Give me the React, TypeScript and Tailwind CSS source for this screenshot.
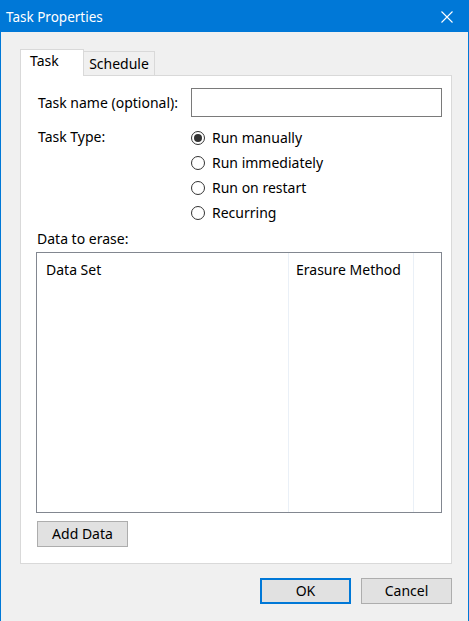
import React from "react";

const font = { fontFamily: '"Segoe UI", "Noto Sans", "Liberation Sans", sans-serif' };

function Radio({ label, checked }: { label: string; checked?: boolean }) {
  return (
    <div className="flex h-[25px] items-center">
      <span className="flex h-[14px] w-[14px] items-center justify-center rounded-full border border-[#333333] bg-white">
        {checked && <span className="h-[8px] w-[8px] rounded-full bg-[#333333]" />}
      </span>
      <span className="ml-[7px] text-[14px] leading-none text-black">{label}</span>
    </div>
  );
}

function Button({ label, primary, className }: { label: string; primary?: boolean; className?: string }) {
  return (
    <button
      className={
        "flex h-[26px] w-[91px] items-center justify-center bg-[#e1e1e1] text-[14px] leading-none text-black " +
        (primary ? "border-2 border-[#0078d7] " : "border border-[#adadad] ") +
        (className ?? "")
      }
    >
      {label}
    </button>
  );
}

export default function App() {
  return (
    <div
      className="flex h-[621px] w-[469px] flex-col border-x border-[#0078d7] bg-[#f0f0f0] antialiased"
      style={font}
    >
      {/* title bar */}
      <div className="flex h-[32px] shrink-0 items-center justify-between bg-[#0078d7] pl-[5px] pr-[15px]">
        <span className="pt-[3px] text-[13.5px] leading-none text-white">Task Properties</span>
        <svg width="12" height="12" viewBox="0 0 12 12" className="mt-[2px] block">
          <path d="M0.5 0.5 L11.5 11.5 M11.5 0.5 L0.5 11.5" stroke="white" strokeWidth="1.1" fill="none" />
        </svg>
      </div>

      <div className="flex flex-1 flex-col pl-[19px] pr-[16px] pt-[17px]">
        {/* tabs */}
        <div className="flex items-end">
          <div className="relative z-10 -mb-px flex h-[27px] w-[64px] border border-b-0 border-[#d9d9d9] bg-white pl-[9px] pt-[4px] text-[14px] leading-none text-black">
            Task
          </div>
          <div className="flex h-[24px] w-[71px] items-center justify-center border border-b-0 border-l-0 border-[#d9d9d9] bg-[#f0f0f0] pt-[1px] text-[14px] leading-none text-black">
            Schedule
          </div>
        </div>

        {/* panel */}
        <div className="flex h-[489px] flex-col border border-[#d9d9d9] bg-white pl-[15px] pr-[9px] pt-[12px]">
          <div className="flex items-center">
            <span className="w-[155px] pl-[2px] text-[14px] leading-none text-black">Task name (optional):</span>
            <div className="h-[29px] flex-1 border border-[#7a7a7a] bg-white" />
          </div>

          <div className="mt-[8px] flex">
            <span className="w-[155px] pl-[2px] pt-[5px] text-[14px] leading-none text-black">Task Type:</span>
            <div className="flex flex-col">
              <Radio label="Run manually" checked />
              <Radio label="Run immediately" />
              <Radio label="Run on restart" />
              <Radio label="Recurring" />
            </div>
          </div>

          <span className="mt-[7px] pl-[1px] text-[14px] leading-none text-black">Data to erase:</span>

          {/* list view */}
          <div className="mt-[6px] flex h-[261px] border border-[#828790] bg-white">
            <div className="w-[252px] border-r border-[#eaf0f7] pl-[9px] pt-[10px] text-[14px] leading-none text-black">
              Data Set
            </div>
            <div className="w-[125px] border-r border-[#eaf0f7] pl-[7px] pt-[10px] text-[14px] leading-none text-black">
              Erasure Method
            </div>
            <div className="flex-1" />
          </div>

          <Button label="Add Data" className="ml-[1px] mt-[8px]" />
        </div>

        {/* dialog buttons */}
        <div className="mt-[14px] flex justify-end gap-[10px]">
          <Button label="OK" primary />
          <Button label="Cancel" />
        </div>
      </div>
    </div>
  );
}
